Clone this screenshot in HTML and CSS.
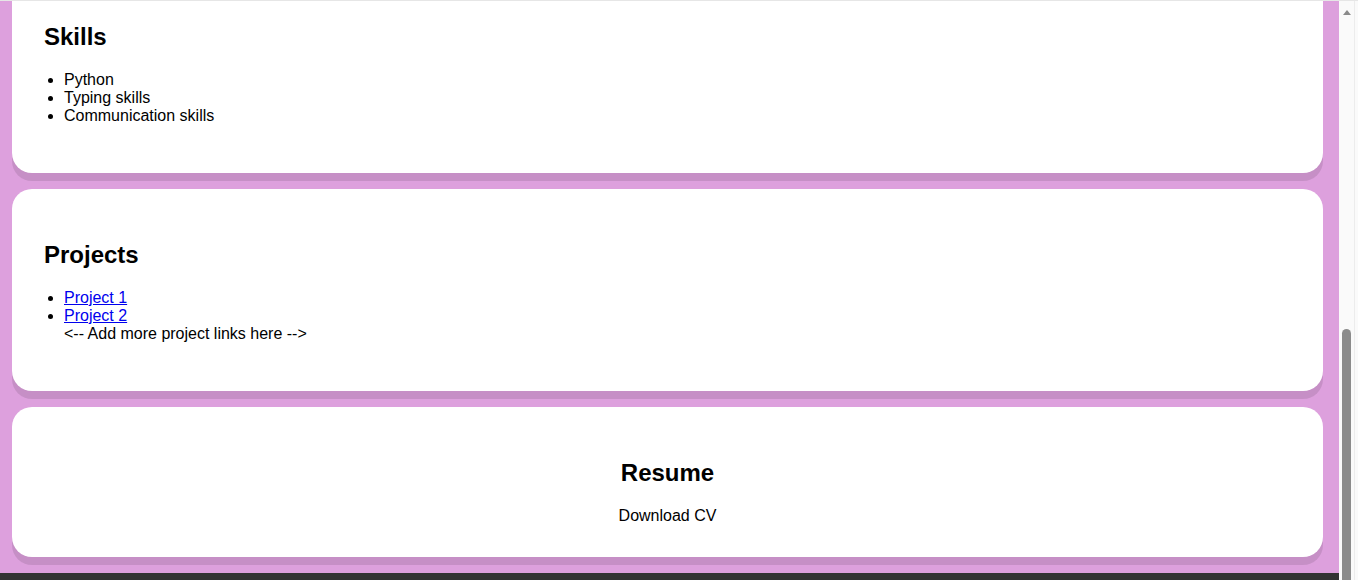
FILE: index.html
```html
<!DOCTYPE html>
<html lang="en">
<head>
<meta charset="utf-8">
<title>My Portfolio</title>
<link rel="stylesheet" href="styles.css">
</head>
<body>
<div class="window-edge"></div>
<div class="fake-scrollbar" aria-hidden="true">
  <div class="scroll-arrow"></div>
  <div class="scroll-thumb"></div>
</div>
<header class="site-header">
  <h1 class="site-title">My Portfolio</h1>
  <nav class="site-nav">
    <a href="#about">About</a>
    <a href="#skills">Skills</a>
    <a href="#projects">Projects</a>
    <a href="#resume">Resume</a>
  </nav>
</header>
<main class="sections">
  <section class="card" id="about">
    <h2>About Me</h2>
    <p>Hello! I am a student who enjoys programming and building small projects.</p>
    <p>I like learning new things and sharing them with others.</p>
  </section>
  <section class="card" id="education">
    <h2>Education</h2>
    <ul class="list">
      <li>High School Diploma</li>
      <li>Online programming courses</li>
    </ul>
  </section>
  <section class="card" id="experience">
    <h2>Experience</h2>
    <ul class="list">
      <li>Volunteer tutor</li>
      <li>Personal coding projects</li>
    </ul>
  </section>
  <section class="card" id="skills">
    <h2>Skills</h2>
    <ul class="list">
      <li>Python</li>
      <li>Typing skills</li>
      <li>Communication skills</li>
    </ul>
  </section>
  <section class="card" id="projects">
    <h2>Projects</h2>
    <ul class="list">
      <li><a href="#">Project 1</a></li>
      <li><a href="#">Project 2</a></li>
      <li class="note">&lt;-- Add more project links here --&gt;</li>
    </ul>
  </section>
  <section class="card card-center" id="resume">
    <h2>Resume</h2>
    <a class="download" href="#">Download CV</a>
  </section>
</main>
<footer class="site-footer">
  <p>&copy; 2024 My Portfolio</p>
</footer>
<script src="script.js"></script>
</body>
</html>
```

FILE: styles.css
```css
html {
  background: #dda0dd;
}
body {
  margin: 0;
  padding-right: 19px;
  font-family: "Liberation Sans", Arial, sans-serif;
  font-size: 16px;
  color: #000;
  background: #dda0dd;
}
.window-edge {
  position: fixed;
  top: 0;
  left: 0;
  right: 0;
  height: 1px;
  background: #e6e6e6;
  z-index: 10;
}
.fake-scrollbar {
  position: fixed;
  top: 0;
  right: 0;
  width: 19px;
  height: 100vh;
  background: linear-gradient(to right, #fafafa 0 15px, #ececec 15px 16px, #fafafa 16px);
  z-index: 5;
}
.scroll-arrow {
  position: absolute;
  left: 4px;
  top: 10px;
  width: 0;
  height: 0;
  border-left: 4.5px solid transparent;
  border-right: 4.5px solid transparent;
  border-bottom: 5px solid #8a8a8a;
}
.scroll-thumb {
  position: absolute;
  left: 3px;
  top: 329px;
  width: 9px;
  height: 300px;
  background: #8b8b8b;
  border-radius: 4.5px;
}
.site-header {
  background: #333;
  color: #fff;
  padding: 20px 32px;
  display: flex;
  align-items: center;
  justify-content: space-between;
}
.site-title {
  margin: 0;
  font-size: 32px;
}
.site-nav {
  display: flex;
  gap: 24px;
}
.site-nav a {
  color: #fff;
  text-decoration: none;
}
.sections {
  display: flex;
  flex-direction: column;
  gap: 16px;
  padding: 16px 16px 16px 12px;
}
.card {
  background: #fff;
  border-radius: 20px;
  padding: 32px;
  box-shadow: 0 8px 0 rgba(0, 0, 0, 0.1);
}
.card h2 {
  font-size: 24px;
  margin: 0.83em 0;
}
.card p {
  margin: 16px 0;
}
.list {
  margin: 16px 0;
  padding-left: 20px;
}
.note {
  list-style: none;
}
.list a {
  color: #0000ee;
}
.card-center {
  text-align: center;
}
.download {
  color: #000;
  text-decoration: none;
}
.site-footer {
  background: #333;
  color: #fff;
  text-align: center;
  padding: 12px;
}
.site-footer p {
  margin: 0;
}
```

FILE: script.js
```js
var skills = document.getElementById('skills');
window.scrollTo(0, skills.offsetTop + 29);
```
